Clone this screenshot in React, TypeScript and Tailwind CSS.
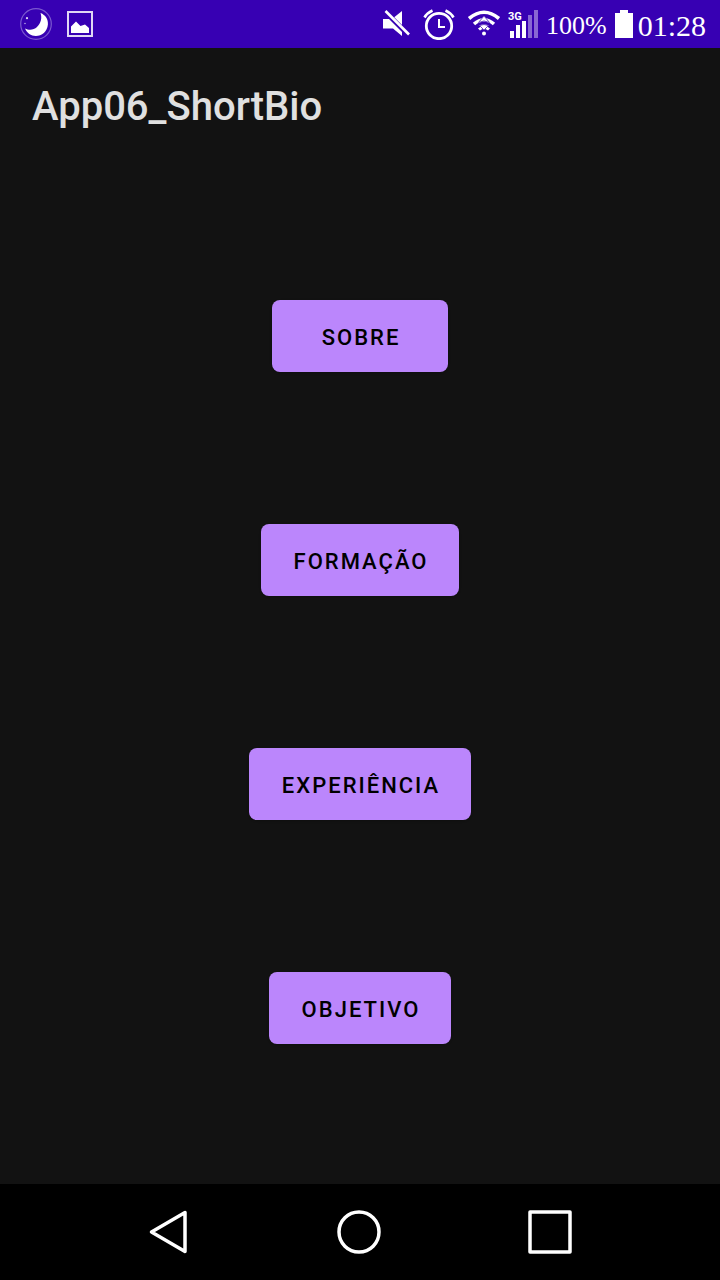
const sections = ["Sobre", "Formação", "Experiência", "Objetivo"];

function MoonIcon() {
  return (
    <svg className="h-8 w-8" viewBox="0 0 32 32" aria-hidden="true">
      <circle cx="16" cy="16" r="15.3" fill="none" stroke="#7c59cf" strokeWidth="1.2" />
      <path d="M20.5 5C25.500 7 28.300 11.200 27.900 16.500 27.300 23.500 21.800 28 15.800 28 11 28 6.800 25 5 20.500 8.500 22.300 13.500 22.500 17 19 20.800 15.500 22.300 10 20.500 5Z" fill="#fff" />
      <circle cx="7" cy="10.200" r="1.100" fill="#e0d8f4" />
      <circle cx="5" cy="15.500" r="0.800" fill="#b8a4e6" />
    </svg>
  );
}

function PictureIcon() {
  return (
    <svg className="h-[26px] w-[26px]" viewBox="0 0 26 26" aria-hidden="true">
      <rect x="1" y="1" width="24" height="24" fill="none" stroke="#e0d8f4" strokeWidth="2" />
      <path d="M4 22V15.500L9 10.500 13.500 15 18 13.500 22 17V22Z" fill="#fff" />
    </svg>
  );
}

function MutedIcon() {
  return (
    <svg className="h-8 w-7" viewBox="0 0 28 32" aria-hidden="true">
      <path d="M0 11H9L19 3V28L10 20.500H0Z" fill="#fff" />
      <path d="M1.500 3 26.500 28" stroke="#3700b3" strokeWidth="5" />
      <path d="M2.500 3 26 26.500" stroke="#fff" strokeWidth="2.600" />
    </svg>
  );
}

function AlarmIcon() {
  return (
    <svg className="h-8 w-8" viewBox="0 0 32 32" fill="none" stroke="#fff" aria-hidden="true">
      <circle cx="16" cy="18" r="12.700" strokeWidth="2.800" />
      <path d="M1.500 9.500Q4 5 9.500 2.500M30.500 9.500Q28 5 22.500 2.500" strokeWidth="2.600" />
      <path d="M16 11V19H22" strokeWidth="2" />
    </svg>
  );
}

function WifiIcon() {
  return (
    <svg className="h-8 w-[34px]" viewBox="0 0 34 32" fill="none" stroke="#fff" aria-hidden="true">
      <path d="M2 10.500Q17-2 32 10.500" strokeWidth="3.600" />
      <path d="M7 16Q17 7.500 27 16" strokeWidth="3.600" />
      <path d="M12 21.500Q17 17 22 21.500" strokeWidth="3" />
      <path d="M11.500 14.500 17 8 22.500 14.500Q17 11.500 11.500 14.500ZM12.500 17.500Q17 15.500 21.500 17.500L17 22Z" fill="#fff" stroke="#6d48c8" strokeWidth="1" />
      <circle cx="17" cy="25.500" r="2" fill="#fff" stroke="none" />
    </svg>
  );
}

function SignalIcon() {
  return (
    <svg className="h-8 w-[30px]" viewBox="0 0 30 32" aria-hidden="true">
      <text x="0" y="12" fill="#fff" fontFamily="Roboto, sans-serif" fontSize="11" fontWeight="700">3G</text>
      <path d="M2 23H6V30H2ZM8 17H12V30H8ZM14 13H18V30H14Z" fill="#fff" />
      <path d="M20 7H24V30H20ZM26 2H30V30H26Z" fill="#8967d3" />
    </svg>
  );
}

function BatteryIcon() {
  return (
    <svg className="h-7 w-[18px]" viewBox="0 0 18 28" aria-hidden="true">
      <path d="M5 0H13V3H18V28H0V3H5Z" fill="#fff" />
    </svg>
  );
}

function StatusBar() {
  return (
    <header className="flex h-12 items-center justify-between bg-[#3700b3] pr-[14px] pl-5 text-white">
      <div className="flex items-center gap-[15px]">
        <MoonIcon />
        <PictureIcon />
      </div>
      <div className="flex items-center font-['Liberation_Serif',serif]">
        <div className="mr-[7px] flex items-center gap-3">
          <MutedIcon />
          <AlarmIcon />
          <WifiIcon />
        </div>
        <SignalIcon />
        <span className="mr-2 ml-2 pt-1 text-[26px] leading-8">100%</span>
        <BatteryIcon />
        <time className="ml-[5px] pt-1 text-[30px] leading-8">01:28</time>
      </div>
    </header>
  );
}

export default function App() {
  return (
    <div className="flex min-h-screen flex-col bg-[#121212] font-[Roboto,sans-serif]">
      <StatusBar />
      <div className="flex h-28 items-center px-8 pt-1.5">
        <h1 className="text-[40px] leading-[48px] font-medium text-[#e0e0e0]">App06_ShortBio</h1>
      </div>
      <main className="flex grow flex-col items-center justify-evenly">
        {sections.map((label) => (
          <div key={label} className="py-3">
            <button
              type="button"
              className="h-[72px] min-w-44 rounded-lg bg-[#bb86fc] pt-1 pr-[31px] pl-[33px] text-[22px] leading-8 font-medium tracking-[2px] text-black uppercase shadow-sm"
            >
              {label}
            </button>
          </div>
        ))}
      </main>
      <nav className="grid h-24 grid-cols-3 items-center justify-items-center bg-black pr-[75px] pl-[73px]">
        <button type="button" aria-label="Voltar">
          <svg className="h-11 w-[38px]" viewBox="0 0 38 44" fill="none" stroke="#fff" strokeWidth="3.500" strokeLinejoin="round">
            <path d="M2.500 22 36 2.500V41.500Z" />
          </svg>
        </button>
        <button type="button" aria-label="Início">
          <svg className="h-11 w-11" viewBox="0 0 44 44" fill="none" stroke="#fff" strokeWidth="3.500">
            <circle cx="22" cy="22" r="20" />
          </svg>
        </button>
        <button type="button" aria-label="Recentes">
          <svg className="h-11 w-11" viewBox="0 0 44 44" fill="none" stroke="#fff" strokeWidth="3.500" strokeLinejoin="round">
            <rect x="2" y="2" width="40" height="40" />
          </svg>
        </button>
      </nav>
    </div>
  );
}
